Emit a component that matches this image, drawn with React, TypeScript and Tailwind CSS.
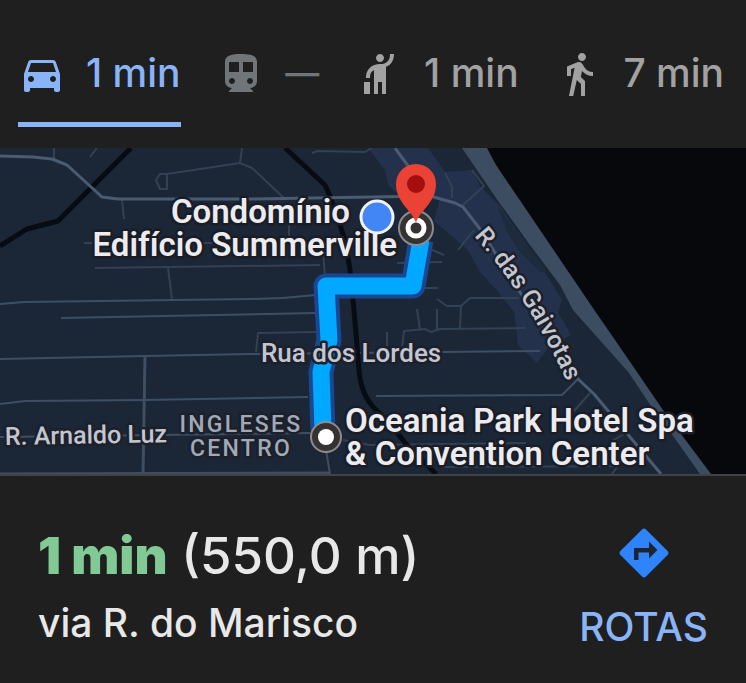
import { MdDirectionsCar, MdDirectionsSubway, MdDirectionsWalk, MdHail } from "react-icons/md";
import type { IconType } from "react-icons";

type Mode = { label: string; time: string; icon: IconType; tone: string; size: string; active?: boolean };

const modes: Mode[] = [
  { label: "Carro", time: "1 min", icon: MdDirectionsCar, tone: "text-[#8ab4f8]", size: "text-[39px]", active: true },
  { label: "Transporte público", time: "—", icon: MdDirectionsSubway, tone: "text-[#707579]", size: "text-[34px]" },
  { label: "Viagem", time: "1 min", icon: MdHail, tone: "text-[#a2a2a2]", size: "text-[39px]" },
  { label: "A pé", time: "7 min", icon: MdDirectionsWalk, tone: "text-[#a2a2a2]", size: "text-[39px]" },
];

function ModeTab({ mode }: { mode: Mode }) {
  const Icon = mode.icon;
  return (
    <button
      type="button"
      role="tab"
      aria-label={`${mode.label}: ${mode.time}`}
      aria-selected={!!mode.active}
      className={`flex h-[77px] items-start gap-5 border-b-[5px] ${mode.active ? "border-[#8ab4f8]" : "border-transparent"} ${mode.tone}`}
    >
      <Icon className="size-12 shrink-0" />
      <span className={`${mode.size} leading-[46px] font-medium whitespace-nowrap`}>{mode.time}</span>
    </button>
  );
}

const minorRoads = [
  "M54 148V159M97 148L90 157",
  "M122 200L124 219M84 243H96M200 243H215",
  "M95 268L320 265M168 268L172 299M323 250L325 277M289 225V238",
  "M167 174L240 163L242 148M240 163L252 168L284 198",
  "M160 174H167V189H160L156 180Z",
  "M312 153L318 151L365 152L372 148",
  "M445 173L452 187V198M463 205L484 186L472 170",
  "M430 249L444 255M397 263L442 262M425 288H438M474 230L458 250",
  "M437 299L447 306H461L470 298H519M461 306L460 328M417 309L420 330M437 309V329",
  "M402 348L404 331L425 329L431 332L440 329L525 328M387 332V346",
  "M256 352L258 333L316 332",
  "M590 393L574 411M612 441L624 434M343 440L370 445L526 443M443 467L618 466M618 466L612 474",
];

const streets = [
  "M0 304L24 302L100 301L250 299L283 298L316 295",
  "M61 318L316 313",
  "M0 359L145 356L250 354L540 351",
  "M0 404L25 401L145 400L308 397",
  "M376 396L562 395L578 379",
  "M0 437L310 433M326 450L330 474",
];

function RouteMap() {
  return (
    <svg
      role="img"
      aria-label="Mapa da rota"
      viewBox="0 148 746 326"
      className="block w-full"
      fontFamily="Roboto, 'Liberation Sans', sans-serif"
    >
      <rect y="148" width="746" height="326" fill="#1b2636" />
      <path
        d="M368 148L385 170L388 185L402 197L440 198L434 221L468 250L480 272L498 292L514 312L518 345L537 363L549 347L571 335L558 312L562 300L545 272L500 206L480 186L472 170L445 172L428 148Z"
        fill="#23314c"
      />
      <path d="M497 205L528 247L547 271L540 272L520 252L508 234Z" fill="#1d2b3d" />
      <path d="M462 148H746V474H700L671 433L649 403L629 373L573 310L560 285L530 245L496 198Z" fill="#3d4d61" />
      <path d="M487 148H746V474H711L663 410L613 337L597 314L496 165Z" fill="#06080c" />

      <g fill="none" strokeLinejoin="round">
        <g stroke="#334154" strokeWidth="2">
          {minorRoads.map((d) => (
            <path key={d} d={d} />
          ))}
        </g>
        <g stroke="#3f4f63" strokeWidth="2">
          {streets.map((d) => (
            <path key={d} d={d} />
          ))}
        </g>
        <path d="M145 356L143 474M0 474L330 473" stroke="#3f4f63" strokeWidth="3" />
        <path d="M131 148L58 221L27 229L0 246" stroke="#070b14" strokeWidth="5" />
        <path
          d="M285 148L325 185L330 196L345 240L350 270L354 310L359 370Q361 395 375 409Q388 420 405 443L436 474"
          stroke="#070b14"
          strokeWidth="5"
        />
        <path
          d="M0 156L33 157L52 159L67 165L102 197L118 199H250L430 196L455 203L463 207L480 229L530 308L578 379L594 394L630 437L661 474M395 148L414 174"
          stroke="#4a5b72"
          strokeWidth="3"
        />
        <path d="M421 240L413 286H326L329 340L321 372L323 430" stroke="#1a4791" strokeWidth="25" />
        <path d="M421 240L413 286H326L329 340L321 372L323 430" stroke="#00a8ff" strokeWidth="17" />
      </g>

      <g
        fill="#c3c6cf"
        stroke="#1c202b"
        strokeWidth="5"
        strokeLinejoin="round"
        paintOrder="stroke"
        fontSize="25"
        fontWeight="500"
      >
        <text x="261" y="362" fontSize="26">Rua dos Lordes</text>
        <text x="5" y="445" transform="rotate(-1 5 445)">R. Arnaldo Luz</text>
        <path id="gaivotas" d="M474 236Q532 302 571 391" fill="none" stroke="none" />
        <text>
          <textPath href="#gaivotas">R. das Gaivotas</textPath>
        </text>
        <g fill="#a2a9b6" fontSize="23" textAnchor="middle" className="tracking-widest">
          <text x="241" y="432">INGLESES</text>
          <text x="241" y="456">CENTRO</text>
        </g>
      </g>

      <g fill="#ececf0" stroke="#1a1d26" strokeWidth="5" strokeLinejoin="round" paintOrder="stroke" fontSize="33" fontWeight="600">
        <text x="350" y="223" textAnchor="end">Condomínio</text>
        <text x="397" y="256" textAnchor="end">Edifício Summerville</text>
        <text x="345" y="432">Oceania Park Hotel Spa</text>
        <text x="345" y="465">&amp; Convention Center</text>
      </g>

      <circle cx="377" cy="217" r="16" fill="#4285f4" stroke="#f1f3f8" strokeWidth="3" />
      <circle cx="416" cy="228" r="17" fill="#353233" stroke="#8c8c8f" strokeWidth="2" />
      <circle cx="416" cy="228" r="8" fill="#353233" stroke="#fff" strokeWidth="5" />
      <path d="M416 223C413 211 396 203 396 184A20 20 0 0 1 436 184C436 203 419 211 416 223Z" fill="#ea4335" />
      <circle cx="416" cy="184" r="9" fill="#a50e0e" />
      <circle cx="326" cy="437" r="15" fill="#353233" stroke="#8c8c8f" strokeWidth="2" />
      <circle cx="326" cy="437" r="8" fill="#fff" />
    </svg>
  );
}

export default function App() {
  return (
    <main className="min-h-screen bg-[#1f1f1f] font-[Inter,'Liberation_Sans',sans-serif]">
      <nav role="tablist" aria-label="Meio de transporte" className="flex justify-between pt-[50px] pr-[22px] pb-[21px] pl-[18px]">
        {modes.map((mode) => (
          <ModeTab key={mode.label} mode={mode} />
        ))}
      </nav>

      <section className="border-b-2 border-[#424244]">
        <RouteMap />
      </section>

      <section className="flex items-start justify-between pt-[48px] pr-[38px] pl-[38px]">
        <div className="text-[#e8e8e8]">
          <h1 className="text-[51px] leading-[64px] font-medium">
            <strong className="font-black text-[#81c995]">1 min</strong> (550,0 m)
          </h1>
          <p className="mt-[12px] text-[39px] leading-[46px] font-medium">via R. do Marisco</p>
        </div>
        <a href="#rotas" className="flex flex-col items-center gap-[26px] text-[#8ab4f8]">
          <svg viewBox="0 0 50 50" className="mt-[4px] size-[50px]" aria-hidden="true">
            <path d="M23 1.4Q25-.4 27 1.4L48.600 23Q50.400 25 48.600 27L27 48.600Q25 50.400 23 48.600L1.400 27Q-.4 25 1.400 23Z" fill="#2f83fb" />
            <path d="M15 32V20H30V13.5L38.5 22L30 30.5V24.500H19.500V32Z" fill="#1d2534" />
          </svg>
          <span className="text-[39px] leading-[46px] font-medium">ROTAS</span>
        </a>
      </section>
    </main>
  );
}
